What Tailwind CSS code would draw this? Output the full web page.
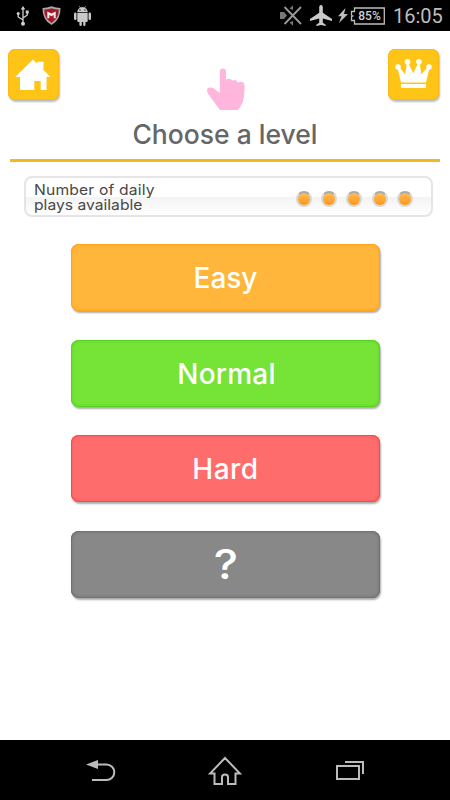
<!DOCTYPE html>
<html lang="en">
<head>
<meta charset="utf-8">
<meta name="viewport" content="width=device-width">
<title>Choose a level</title>
<script src="https://cdn.jsdelivr.net/npm/@tailwindcss/browser@4"></script>
</head>
<body class="w-[450px] h-[800px] overflow-hidden bg-white font-['Inter','Liberation_Sans',sans-serif] flex flex-col">
<!-- Status bar -->
<header class="h-[31px] shrink-0 bg-black text-[#bdbdbd] flex items-center justify-between pl-4 pr-[7px]">
  <div class="flex items-center">
    <svg class="w-[13px] h-[20px]" viewBox="0 0 13 20" fill="none" stroke="#d0d0d0" stroke-width="1.3"><path d="M7 2v15M7 14L2.200 11V7.500M7 12l4.300-3V6"/><path d="M4.700 3.500L7 0l2.300 3.500zM9.700 4.500h3v3h-3z" fill="#d0d0d0" stroke="none"/><circle cx="2.200" cy="7.500" r="1.500" fill="#d0d0d0" stroke="none"/><circle cx="7" cy="17.800" r="2" fill="#d0d0d0" stroke="none"/></svg>
    <svg class="w-[19px] h-[19px] ml-[13px]" viewBox="0 0 19 19"><path d="M.5 2Q5 2 9.500.3 14 2 18.500 2 19 13.500 9.500 19 0 13.500.5 2z" fill="#a8a8a8"/><path d="M2.300 3.600Q6 3.400 9.500 2.200 13 3.400 16.700 3.600 17 12.400 9.500 17 2 12.400 2.300 3.600z" fill="#a51626"/><path d="M5.300 12.200V5.600l4.200 2 4.200-2v6.600h-2V9l-2.200 1.200L7.300 9v3.200z" fill="#eee"/></svg>
    <svg class="w-[17px] h-[20px] ml-[13px]" viewBox="0 0 17 20" fill="#c9c9c9"><path d="M3.300 6C3.600 3.600 4.500 2.500 6 1.700L5 .3l.5-.3 1.100 1.400q1.900-.6 3.800 0L11.500 0l.5.300-1 1.400C12.500 2.500 13.400 3.600 13.700 6z"/><rect x="0" y="6.500" width="2.500" height="7.500" rx="1.200"/><rect x="14.500" y="6.500" width="2.500" height="7.500" rx="1.200"/><path d="M3.300 6.800h10.400V15q0 1-1 1h-1.200v2.800q0 1.200-1.200 1.200T9.200 18.800V16H7.800v2.800Q7.800 20 6.600 20t-1.200-1.200V16H4.300q-1 0-1-1z"/><circle cx="6" cy="4" r=".65" fill="#000"/><circle cx="11" cy="4" r=".65" fill="#000"/></svg>
  </div>
  <div class="flex items-center">
    <svg class="w-[22px] h-[21px]" viewBox="0 0 22 21"><path d="M0 7h4l3 3.500L4 14H0zM9.500 3.500L13 .2V5zM9.500 17.500l3.500 3.300V16z" fill="#777"/><path d="M4.500 2L21 19M21 2L4.500 19" stroke="#999" stroke-width="1.800"/></svg>
    <svg class="w-[22px] h-[21px] ml-[8px]" viewBox="0 0 22 21" fill="#cbcbcb"><path d="M9.200 2Q9.400 0 11 0t1.800 2v5.800L22 14v2l-9.200-2.600v4.400l2.900 2V21L11 20l-4.700 1v-1.200l2.900-2v-4.400L0 16v-2l9.200-6.200z"/></svg>
    <svg class="w-[10px] h-[15px] ml-[6px]" viewBox="0 0 10 15" fill="#bdbdbd"><path d="M7.500 0L0 8.200h3.500L1 15l9-9H6z"/></svg>
    <div class="relative w-[35px] h-[18px] ml-[2px] flex items-center justify-center">
      <svg class="absolute inset-0 w-[35px] h-[18px]" viewBox="0 0 35 18" fill="none" stroke="#bdbdbd" stroke-width="1.300"><path d="M4.500 1h29.800v16H4.500v-3.500H1.500v-3.800l1.300-.7-1.300-.8V4.500h3z"/></svg>
      <span class="relative left-[2px] font-['Roboto',sans-serif] font-medium text-[12px] leading-none text-[#d0d0d0]">85%</span>
    </div>
    <span class="w-[50px] ml-[8px] font-['Roboto',sans-serif] text-[20px] leading-[20px] whitespace-nowrap">16:05</span>
  </div>
</header>

<main class="flex-1 flex flex-col">
  <div class="flex justify-between pl-[8px] pr-[11px] pt-[18px] h-[90px]">
    <button aria-label="Home" class="size-[51px] rounded-[7px] bg-[#ffc516] shadow-[inset_0_0_0_1px_#f9b91b,1px_2px_2px_#0004] flex items-center justify-center">
      <svg class="size-[51px]" viewBox="0 0 51 51" fill="#fff"><path d="M25 10.500l4.200 4.200v-2h6.300v8.200l7 7h-4V41h-5.800v-9h-6.400v9H12V28H7.200z"/></svg>
    </button>
    <svg class="w-[38px] h-[43px] mt-[19px] ml-[4px]" viewBox="0 0 38 43" fill="#ffb5dc"><path d="M12.800 3.500a3.100 3.100 0 0 1 6.200 0V12q1-1.300 3-1.300 2.400 0 3 2.100 1-.9 2.700-.9 2.400 0 3.100 2.800.8-1 2.800-1 3.700.4 3.900 3.400.200 11-1.700 17-2 5-5.300 8H13L1.200 26Q-.7 22.500.5 20.500 2.500 18.500 6.500 20.200L12.800 25z"/></svg>
    <button aria-label="Ranking" class="size-[51px] rounded-[7px] bg-[#ffc516] shadow-[inset_0_0_0_1px_#f9b91b,1px_2px_2px_#0004] flex items-center justify-center">
      <svg class="size-[51px]" viewBox="0 0 51 51" fill="#fff"><circle cx="10" cy="18" r="2.800"/><circle cx="19.500" cy="12.700" r="2.800"/><circle cx="31" cy="12.700" r="2.800"/><circle cx="41" cy="18" r="2.800"/><path d="M9.300 18l1.400-.4 6.500 7.600 1.700-11.500h1.300l5.100 10.500L30.200 13.700h1.300l1.900 11.500 6.900-7.600 1.400.4L38 33.500H13zM13 35h25v4H13z"/></svg>
    </button>
  </div>
  <h1 class="h-[41px] mx-[10px] border-b-[3px] border-[#f2ba20] text-center text-[26.500px] leading-[27px] text-[#666] font-medium">Choose a level</h1>

  <section class="mt-[14px] ml-[24px] w-[409px] h-[41px] rounded-[8px] border-2 border-[#e5e5e5] bg-linear-to-b from-white from-50% via-[#f3f3f3] via-51% to-white flex items-center justify-between pl-[8px] pr-[18px]">
    <p class="flex flex-col text-[14.500px] leading-[15px] text-[#484848] whitespace-nowrap origin-left scale-x-[1.080]"><span class="tracking-[0.150px]">Number of daily</span><span>plays available</span></p>
    <div class="flex gap-[9.300px] pt-[4px]">
      <i class="size-[16px] rounded-full border-2 border-[#d8d8d8] border-t-[#aaa] bg-linear-to-b from-[#ffbd55] to-[#ff9600]"></i>
      <i class="size-[16px] rounded-full border-2 border-[#d8d8d8] border-t-[#aaa] bg-linear-to-b from-[#ffbd55] to-[#ff9600]"></i>
      <i class="size-[16px] rounded-full border-2 border-[#d8d8d8] border-t-[#aaa] bg-linear-to-b from-[#ffbd55] to-[#ff9600]"></i>
      <i class="size-[16px] rounded-full border-2 border-[#d8d8d8] border-t-[#aaa] bg-linear-to-b from-[#ffbd55] to-[#ff9600]"></i>
      <i class="size-[16px] rounded-full border-2 border-[#d8d8d8] border-t-[#aaa] bg-linear-to-b from-[#ffbd55] to-[#ff9600]"></i>
    </div>
  </section>

  <nav class="mt-[27px] ml-[71px] w-[309px] flex flex-col gap-[28.600px] text-white text-[28px] font-medium [&>button]:h-[67px] [&>button]:rounded-[8px]">
    <button class="bg-[#ffb63a] shadow-[inset_0_0_0_1px_#ffa51c,inset_0_0_0_3px_#ffb233,1px_2px_2px_#0005]">Easy</button>
    <button class="bg-[#76e337] shadow-[inset_0_0_0_1px_#55d51e,inset_0_0_0_3px_#70df33,1px_2px_2px_#0005] tracking-[0.200px] pl-[2px] pt-[1px]">Normal</button>
    <button class="bg-[#ff6c6c] shadow-[inset_0_0_0_1px_#ff4545,inset_0_0_0_3px_#fd6767,1px_2px_2px_#0005] tracking-[0.500px]">Hard</button>
    <button class="bg-[#888] shadow-[inset_0_0_0_1px_#707070,inset_0_0_0_3px_#828282,1px_2px_2px_#0005] text-[41px] leading-none"><span class="inline-block scale-x-[1.120]">?</span></button>
  </nav>
</main>

<!-- Navigation bar -->
<footer class="h-[60px] shrink-0 bg-black flex items-center justify-between pl-[86px] pr-[85px]">
  <svg class="w-[30px] h-[22px] mt-[1px]" viewBox="0 0 30 22"><path d="M0 4.500L12 0v9z" fill="#bcbcbc"/><path d="M11 4.500h9.500a7.800 7.800 0 0 1 0 15.600H6" fill="none" stroke="#bcbcbc" stroke-width="2"/></svg>
  <svg class="w-[34px] h-[30px] mt-[1px] -ml-[2px]" viewBox="0 0 34 30" fill="none" stroke="#bcbcbc" stroke-width="2"><path d="M17 2L2 17.500h4.500V28h7.500v-7q0-2.500 3-2.500t3 2.500v7h7.500V17.500H32z"/></svg>
  <svg class="w-[30px] h-[21px] mt-[1px]" viewBox="0 0 30 21" fill="none" stroke="#bcbcbc" stroke-width="2"><path d="M2 6h22v13H2zM10 2h18v12"/></svg>
</footer>
</body>
</html>
